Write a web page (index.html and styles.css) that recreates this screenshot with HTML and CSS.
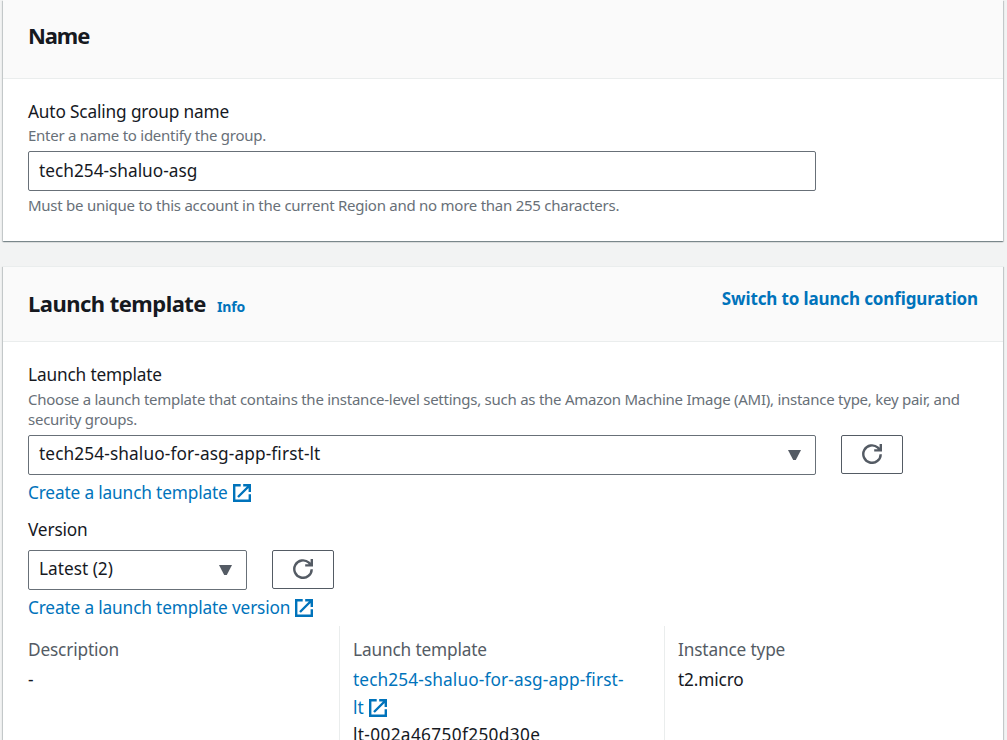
FILE: index.html
```html
<!DOCTYPE html>
<html lang="en">
<head>
<meta charset="utf-8">
<title>Create Auto Scaling group</title>
<link rel="stylesheet" href="styles.css">
</head>
<body>
<svg class="defs" width="0" height="0">
  <symbol id="external" viewBox="0 0 18 18"><path d="M7.7 1.2H1.2v15.6h15.6v-6.5M5 13 15.5 2.5M10.2 1.3h6.6V8" fill="none" stroke="currentColor" stroke-width="2.4"/></symbol>
  <symbol id="refresh" viewBox="0 0 20 20"><path d="M18.7 10.2A8.7 8.7 0 1 1 15.9 3.7L18 6M18.8 0v6.4h-6.6" fill="none" stroke="currentColor" stroke-width="2.4"/></symbol>
</svg>
<main class="page">
  <section class="card name-card">
    <header class="card-header"><h2 class="title"><span class="t-name">Name</span></h2></header>
    <div class="card-body">
      <div class="label"><span>Auto Scaling group name</span></div>
      <p class="hint"><span>Enter a name to identify the group.</span></p>
      <div class="field wide"><span class="value">tech254-shaluo-asg</span></div>
      <p class="hint constraint"><span>Must be unique to this account in the current Region and no more than 255 characters.</span></p>
    </div>
  </section>
  <section class="card template-card">
    <header class="card-header">
      <h2 class="title"><span>Launch template</span><a class="info">Info</a></h2>
      <a class="switch"><span>Switch to launch configuration</span></a>
    </header>
    <div class="card-body">
      <div class="label"><span>Launch template</span></div>
      <p class="hint two-line"><span>Choose a launch template that contains the instance-level settings, such as the Amazon Machine Image (AMI), instance type, key pair, and</span><br><span>security groups.</span></p>
      <div class="controls">
        <div class="field wide"><span class="resource">tech254-shaluo-for-asg-app-first-lt</span><i class="caret"></i></div>
        <div class="button"><svg class="refresh"><use href="#refresh"/></svg></div>
      </div>
      <a class="link"><span>Create a launch template</span><svg class="external"><use href="#external"/></svg></a>
      <div class="label version"><span>Version</span></div>
      <div class="controls">
        <div class="field narrow"><span class="value">Latest (2)</span><i class="caret"></i></div>
        <div class="button"><svg class="refresh"><use href="#refresh"/></svg></div>
      </div>
      <a class="link"><span>Create a launch template version</span><svg class="external"><use href="#external"/></svg></a>
      <div class="columns">
        <div class="column"><div class="key"><span>Description</span></div><div>-</div></div>
        <div class="column"><div class="key"><span>Launch template</span></div>
          <a class="blue"><span class="resource">tech254-shaluo-for-asg-app-first-</span><br><span class="tail"><span class="resource">lt</span><svg class="external"><use href="#external"/></svg></span></a>
          <div class="id"><span>lt-002a46750f250d30e</span></div></div>
        <div class="column"><div class="key"><span>Instance type</span></div><div><span>t2.micro</span></div></div>
      </div>
    </div>
  </section>
</main>
</body>
</html>
```
FILE: styles.css
```css
* { box-sizing: border-box; }
body { margin: 0; background: #f2f3f3; color: #16191f; font: 17.25px/28px "Noto Sans", sans-serif; letter-spacing: -.155px; }
.defs { display: none; }
.page { height: 740px; overflow: hidden; padding: 0 4px 0 3px; }
h2, p { margin: 0; }
span { white-space: nowrap; }
.card { background: #fff; box-shadow: 0 1px 1px 0 rgba(0,28,36,.3), 1px 1px 1px 0 rgba(0,28,36,.15), -1px 1px 1px 0 rgba(0,28,36,.15); }
.name-card { height: 241px; margin-bottom: 25px; }
.template-card { height: 600px; border-top: 1px solid #eaeded; }
.card-header { display: flex; justify-content: space-between; background: #fafafa; border-bottom: 1px solid #eaeded; padding: 0 25px; }
.name-card .card-header { height: 79px; padding-top: 21px; }
.template-card .card-header { height: 75px; padding-top: 22px; }
.title { font-size: 22px; line-height: 28px; font-weight: 700; letter-spacing: -.53px; }
.t-name { letter-spacing: -1.1px; }
.value { letter-spacing: 0; }
.resource { letter-spacing: .11px; }
.info { font-size: 14px; letter-spacing: -.1px; margin-left: 11px; color: #0073bb; }
.switch { font-size: 17px; font-weight: 700; line-height: 19px; letter-spacing: -.13px; color: #0073bb; }
.card-body { padding: 19px 25px 0; }
.label { height: 28px; }
.hint { font-size: 15px; letter-spacing: -.255px; line-height: 20px; height: 25px; color: #687078; position: relative; top: -1px; }
.constraint { padding-top: 5px; }
.two-line { height: 46px; padding-top: 1px; }
.field { height: 40px; border: 1px solid #687078; border-radius: 2px; display: flex; align-items: center; justify-content: space-between; padding: 0 14px 2px 10px; }
.name-card .field { padding-bottom: 0; }
.wide { width: 788px; }
.narrow { width: 219px; }
.controls { display: flex; gap: 25px; }
.button { width: 62px; height: 39px; border: 1px solid #545b64; border-radius: 2px; display: flex; align-items: center; justify-content: center; padding-bottom: 1px; color: #545b64; }
.refresh { width: 20px; height: 20px; }
.caret { width: 13px; height: 10px; background: #545b64; clip-path: polygon(0 0, 100% 0, 60% 100%, 40% 100%); margin-top: 2px; }
.external { width: 18px; height: 18px; flex: none; }
.link { display: flex; align-items: center; gap: 5px; height: 28px; margin-top: 4px; color: #0073bb; }
.version { margin-top: 9px; height: 34px; }
.columns { display: grid; grid-template-columns: 311px 325px 1fr; margin-top: 4px; height: 130px; }
.column { padding-top: 10px; }
.column + .column { border-left: 1px solid #eaeded; padding-left: 13px; }
.key { color: #545b64; margin-bottom: 2px; }
.blue { color: #0073bb; display: block; }
.tail { display: flex; align-items: center; gap: 5px; }
.id { margin-top: -1px; letter-spacing: .34px; }
```
